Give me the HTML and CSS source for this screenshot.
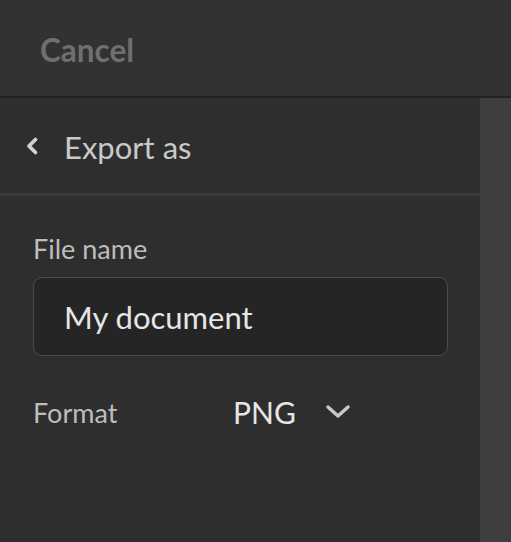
FILE: index.html
```html
<!DOCTYPE html>
<html>
<head>
<meta charset="utf-8">
<link rel="stylesheet" href="styles.css">
</head>
<body>
<div class="topbar"><span class="cancel">Cancel</span></div>
<div class="main">
  <div class="panel">
    <div class="panel-header">
      <svg class="back" width="14" height="20" viewBox="0 0 14 20"><path d="M10.5 3.5 L4 10 L10.5 16.5" fill="none" stroke="#d2d2d2" stroke-width="3.8" stroke-linecap="round" stroke-linejoin="round"/></svg>
      <span class="title">Export as</span>
    </div>
    <div class="form">
      <div class="label">File name</div>
      <div class="input">My document</div>
      <div class="row">
        <span class="label">Format</span>
        <span class="select">PNG
          <svg class="chev" width="26" height="16" viewBox="0 0 26 16"><path d="M3 3 L13 12 L23 3" fill="none" stroke="#c8c8c8" stroke-width="3.5" stroke-linecap="round" stroke-linejoin="round"/></svg>
        </span>
      </div>
    </div>
  </div>
  <div class="scroll"></div>
</div>
</body>
</html>
```
FILE: styles.css
```css
html, body { margin: 0; padding: 0; }
body {
  width: 511px;
  height: 542px;
  overflow: hidden;
  background: #2e2e2e;
  font-family: Lato, "Open Sans", sans-serif;
}
.topbar {
  height: 96px;
  background: #323232;
  border-bottom: 2px solid #222222;
  display: flex;
  align-items: center;
  padding-left: 40px;
}
.cancel {
  color: #6f6f6f;
  font-weight: 700;
  font-size: 31.5px;
  margin-top: 3px;
}
.main {
  display: flex;
  height: 444px;
}
.panel {
  width: 480px;
  background: #2e2e2e;
}
.scroll {
  flex: 1;
  background: #3e3e3e;
}
.panel-header {
  height: 95px;
  display: flex;
  align-items: center;
  padding-left: 25px;
  border-bottom: 3px solid #3a3a3a;
}
.back { margin-right: 25px; }
.title {
  color: #c9c9c9;
  font-size: 31px;
  margin-top: 2px;
}
.form {
  padding: 36px 33px 0 33px;
}
.label {
  color: #bdbdbd;
  font-size: 27px;
}
.input {
  margin-top: 12px;
  height: 79px;
  box-sizing: border-box;
  width: 415px;
  border: 1.5px solid #4b4b4b;
  border-radius: 9px;
  background: #252525;
  color: #e6e6e6;
  font-size: 31px;
  display: flex;
  align-items: center;
  padding-left: 30px;
}
.row {
  margin-top: 38px;
  display: flex;
  align-items: center;
}
.row .label { width: 200px; }
.select {
  color: #e6e6e6;
  font-size: 30px;
  display: flex;
  align-items: center;
}
.chev { margin-left: 29px; }
```
